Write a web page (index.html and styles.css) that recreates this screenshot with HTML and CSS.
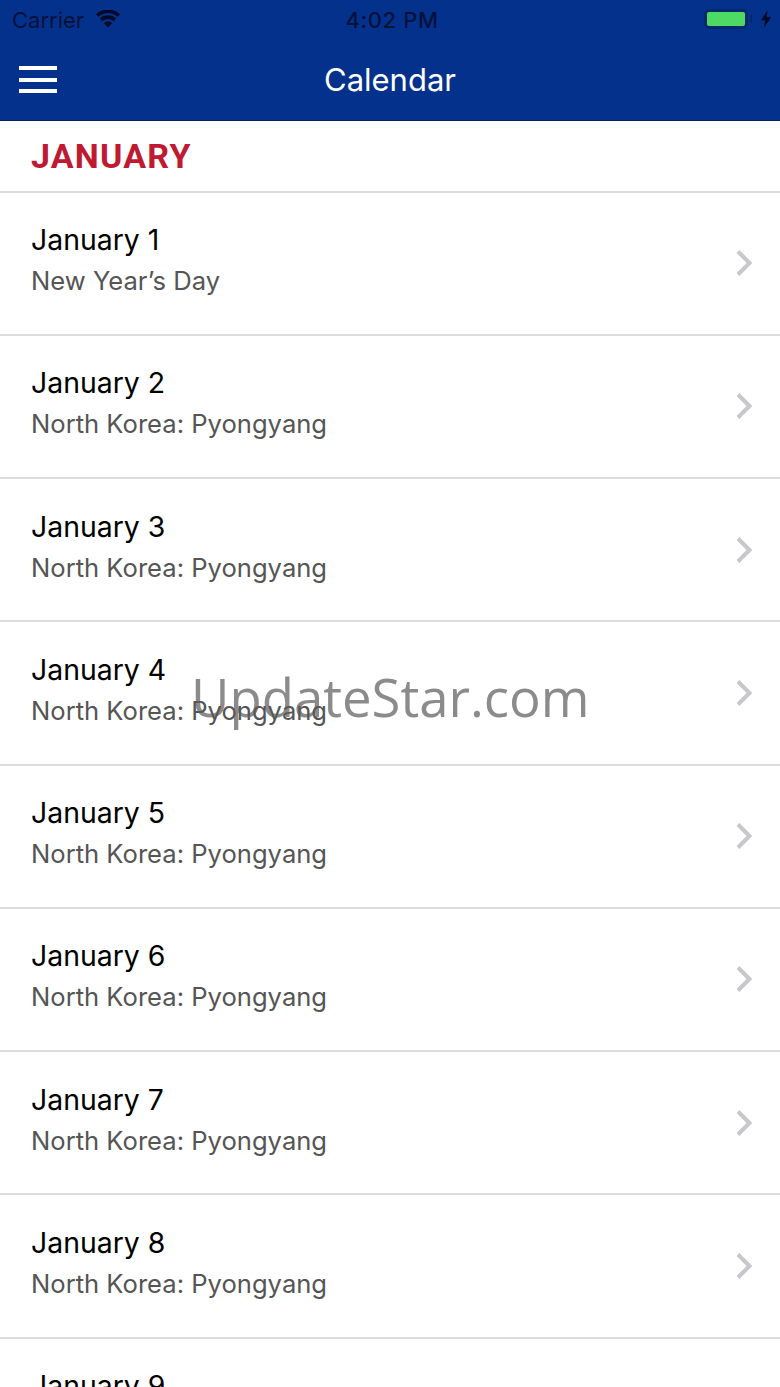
FILE: index.html
```html
<!DOCTYPE html>
<html lang="en">
<head>
<meta charset="utf-8">
<title>Calendar</title>
<link rel="stylesheet" href="styles.css">
</head>
<body>
<div class="screen">
  <header class="header">
    <div class="status">
      <div class="status-side">
        <span class="carrier">Carrier</span>
        <svg class="wifi" width="26" height="18" viewBox="0 0 26 18"><path d="M13 17.5 8.9 12.9a6 6 0 0 1 8.2 0Z"/><path d="M7.3 11.2 4.9 8.5a12 12 0 0 1 16.2 0l-2.4 2.7a8.5 8.5 0 0 0-11.4 0Z"/><path d="M3.3 6.8 1 4.2a17.6 17.6 0 0 1 24 0l-2.3 2.6a14.2 14.2 0 0 0-19.4 0Z"/></svg>
      </div>
      <span class="time">4:02 PM</span>
      <div class="status-side status-right">
        <span class="battery"><span class="battery-fill"></span></span>
        <span class="battery-cap"></span>
        <svg class="bolt" width="12" height="20" viewBox="0 0 12 20"><path d="M7.6 1 1 11.3h4.2L3.9 19 11 8.2H6.6Z"/></svg>
      </div>
    </div>
    <div class="nav">
      <button class="menu" aria-label="Menu"><span></span><span></span><span></span></button>
      <h1 class="title">Calendar</h1>
    </div>
  </header>
  <h2 class="month">JANUARY</h2>
  <ul class="list">
    <li class="row"><div class="row-text"><div class="date">January 1</div><div class="event">New Year’s Day</div></div><svg class="chevron" width="18" height="28" viewBox="0 0 18 28"><path d="M3 2.5 14.5 14 3 25.500"/></svg></li>
    <li class="row"><div class="row-text"><div class="date">January 2</div><div class="event">North Korea: Pyongyang</div></div><svg class="chevron" width="18" height="28" viewBox="0 0 18 28"><path d="M3 2.5 14.5 14 3 25.500"/></svg></li>
    <li class="row"><div class="row-text"><div class="date">January 3</div><div class="event">North Korea: Pyongyang</div></div><svg class="chevron" width="18" height="28" viewBox="0 0 18 28"><path d="M3 2.5 14.5 14 3 25.500"/></svg></li>
    <li class="row"><div class="row-text"><div class="date">January 4</div><div class="event">North Korea: Pyongyang</div></div><svg class="chevron" width="18" height="28" viewBox="0 0 18 28"><path d="M3 2.5 14.5 14 3 25.500"/></svg></li>
    <li class="row"><div class="row-text"><div class="date">January 5</div><div class="event">North Korea: Pyongyang</div></div><svg class="chevron" width="18" height="28" viewBox="0 0 18 28"><path d="M3 2.5 14.5 14 3 25.500"/></svg></li>
    <li class="row"><div class="row-text"><div class="date">January 6</div><div class="event">North Korea: Pyongyang</div></div><svg class="chevron" width="18" height="28" viewBox="0 0 18 28"><path d="M3 2.5 14.5 14 3 25.500"/></svg></li>
    <li class="row"><div class="row-text"><div class="date">January 7</div><div class="event">North Korea: Pyongyang</div></div><svg class="chevron" width="18" height="28" viewBox="0 0 18 28"><path d="M3 2.5 14.5 14 3 25.500"/></svg></li>
    <li class="row"><div class="row-text"><div class="date">January 8</div><div class="event">North Korea: Pyongyang</div></div><svg class="chevron" width="18" height="28" viewBox="0 0 18 28"><path d="M3 2.5 14.5 14 3 25.500"/></svg></li>
    <li class="row"><div class="row-text"><div class="date">January 9</div><div class="event">North Korea: Pyongyang</div></div><svg class="chevron" width="18" height="28" viewBox="0 0 18 28"><path d="M3 2.5 14.5 14 3 25.500"/></svg></li>
  </ul>
  <div class="watermark">UpdateStar.com</div>
</div>
</body>
</html>
```
FILE: styles.css
```css
* { box-sizing: border-box; }
html, body { margin: 0; padding: 0; }
body { font-family: Inter, Roboto, "Liberation Sans", sans-serif; background: #fff; }
.screen { position: relative; width: 780px; height: 1387px; overflow: hidden; background: #fff; }
.header { height: 121px; background: #03318c; border-bottom: 1px solid #02225f; }
.status { height: 40px; display: grid; grid-template-columns: 1fr auto 1fr; align-items: center; padding: 0 8px 0 12px; color: #02123a; }
.status-side { display: flex; align-items: center; gap: 11px; }
.status-right { justify-content: flex-end; gap: 0; }
.carrier, .time { font-size: 22px; line-height: 40px; }
.time { font-weight: 500; letter-spacing: 0.6px; }
.wifi, .bolt { fill: #010a24; display: block; }
.wifi { margin-bottom: 3px; }
.battery { width: 44px; height: 20px; border: 3px solid #02296e; border-radius: 5px; display: block; margin-bottom: 2px; }
.battery-fill { display: block; height: 100%; background: #4cd964; border-radius: 2px; }
.battery-cap { width: 2px; height: 8px; background: #02296e; margin: 0 8px 2px 2px; }
.bolt { margin-bottom: 2px; }
.nav { height: 80px; position: relative; display: flex; align-items: center; justify-content: center; }
.title { margin: 0 0 1px; font-size: 31px; font-weight: 400; color: #fff; }
.menu { position: absolute; left: 19px; top: 26px; width: 38px; height: 27px; padding: 0; border: 0; background: none; display: flex; flex-direction: column; justify-content: space-between; }
.menu span { display: block; height: 4px; background: #fff; }
.month { margin: 0; height: 71.5px; padding: 0 31px; display: flex; align-items: center; font-family: Roboto, sans-serif; font-size: 34px; font-weight: 700; letter-spacing: 1.2px; color: #bf1a32; border-bottom: 2px solid #dcdcdc; }
.list { list-style: none; margin: 0; padding: 0; }
.row { height: 143.25px; padding: 0 27px 0 31px; display: flex; align-items: center; justify-content: space-between; border-bottom: 2px solid #dcdcdc; }
.row-text { margin-top: -7px; }
.date { font-size: 28.4px; line-height: 38px; color: #000; }
.event { font-size: 25.6px; line-height: 34px; margin-top: 5px; color: #555; }
.chevron { fill: none; stroke: #c7c7cc; stroke-width: 4; display: block; }
.watermark { position: absolute; left: 191px; top: 661px; font-family: "Open Sans", sans-serif; font-size: 52.700px; line-height: 72px; color: rgba(90, 90, 90, 0.7); white-space: nowrap; }
```
